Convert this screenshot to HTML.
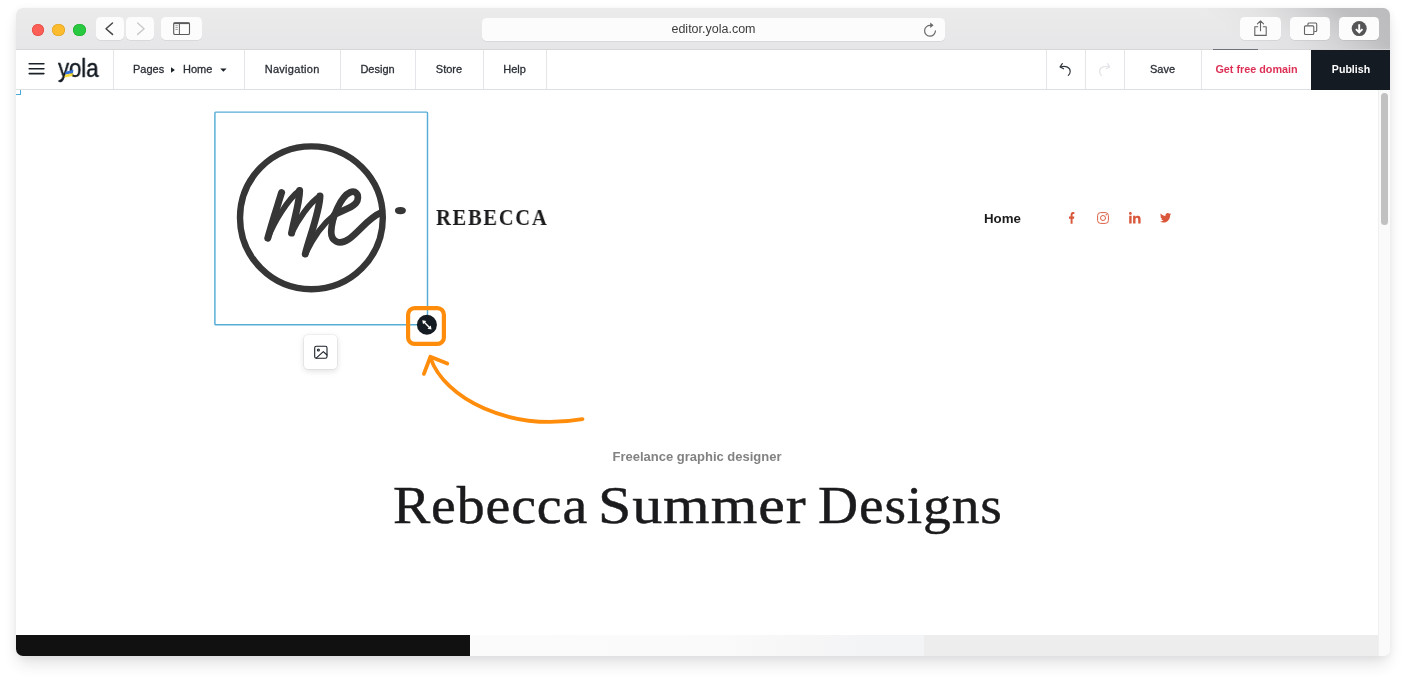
<!DOCTYPE html>
<html lang="en">
<head>
<meta charset="utf-8">
<title>Yola Editor</title>
<style>
*{box-sizing:border-box;margin:0;padding:0}
html,body{width:1406px;height:680px;overflow:hidden;background:#fff;font-family:"Liberation Sans",sans-serif}
#shadow{position:absolute;left:16px;top:8px;width:1374px;height:648px;border-radius:7px;box-shadow:0 10px 16px -3px rgba(40,45,50,.14),0 1px 9px rgba(40,45,50,.055)}
#win{position:absolute;left:16px;top:8px;width:1374px;height:648px;border-radius:7px;background:#fff;overflow:hidden}
#pg{position:absolute;left:-16px;top:-8px;width:1406px;height:680px}
#pg div,#pg svg{position:absolute}
svg{overflow:visible}
.t{will-change:transform;white-space:nowrap}
#titlebar{left:16px;top:8px;width:1374px;height:42px;background:linear-gradient(38deg,rgba(188,187,190,0) 0%,rgba(188,187,190,0) 50%,rgba(188,187,190,.15) 64%,rgba(188,187,190,.4) 73%,rgba(188,187,190,.65) 80%,rgba(188,187,190,.95) 87%,#bcbbbe 100%) no-repeat right top/330px 100%,linear-gradient(180deg,#ecebec,#e6e5e7);border-bottom:1px solid #d6d5d7}
.tl{top:23.5px;width:12.5px;height:12.5px;border-radius:50%}
.tbtn{top:17.2px;height:22.8px;background:#fcfcfc;border-radius:4.5px;box-shadow:0 .5px .6px rgba(0,0,0,.12)}
#toolbar{left:16px;top:50px;width:1374px;height:40px;background:#fff;border-bottom:1px solid #dcdfe4}
.sep{top:50px;width:1px;height:39px;background:#e4e6ea}
.ti{top:50px;height:39px;line-height:39px;font-size:11px;color:#2b2f36;-webkit-text-stroke:.3px currentColor}
.h1{height:60px;line-height:60px;font-family:'Liberation Serif',serif;font-size:53px;color:#1b1b1d;-webkit-text-stroke:.45px #1b1b1d;letter-spacing:.8px;transform-origin:0 50%;transform:scaleX(1.07)}
</style>
</head>
<body>
<div id="shadow"></div>
<div id="win"><div id="pg">

  <!-- ===== Safari title bar ===== -->
  <div id="titlebar"></div>
  <div class="tl" style="left:31.5px;background:#fd5f57;box-shadow:inset 0 0 0 .6px #e0443e"></div>
  <div class="tl" style="left:52.3px;background:#fdbb2e;box-shadow:inset 0 0 0 .6px #dea123"></div>
  <div class="tl" style="left:73px;background:#28c840;box-shadow:inset 0 0 0 .6px #1dad2b"></div>
  <div class="tbtn" style="left:96px;width:28px"></div>
  <div class="tbtn" style="left:126px;width:28px"></div>
  <div class="tbtn" style="left:161px;width:41px"></div>
  <div class="tbtn" style="left:482px;width:462.8px;top:18.1px"></div>
  <div class="t" style="left:482px;top:17.6px;width:463px;height:23px;line-height:22px;text-align:center;font-size:12.5px;color:#3d3d3f">editor.yola.com</div>
  <div class="tbtn" style="left:1240px;width:41px"></div>
  <div class="tbtn" style="left:1290px;width:40px"></div>
  <div class="tbtn" style="left:1339px;width:40px"></div>
  <svg style="left:0;top:0" width="1406" height="60" viewBox="0 0 1406 60" fill="none">
    <path d="M112.5 23 L106 28.7 L112.5 34.4" stroke="#454547" stroke-width="1.5" stroke-linecap="round" stroke-linejoin="round"/>
    <path d="M137.6 23 L144.1 28.7 L137.6 34.4" stroke="#c9c9ca" stroke-width="1.4" stroke-linecap="round" stroke-linejoin="round"/>
    <rect x="173.7" y="22.8" width="15.8" height="11.7" rx="1.3" stroke="#5a5a5c" stroke-width="1.1"/>
    <path d="M173.7 23.3 H189.5" stroke="#5a5a5c" stroke-width="1.6"/>
    <path d="M179.4 22.8 V34.5" stroke="#5a5a5c" stroke-width="1"/>
    <path d="M175.4 25.7 H177.8 M175.4 27.6 H177.8 M175.4 29.5 H177.8" stroke="#8a8a8c" stroke-width=".8"/>
    <!-- reload -->
    <path d="M935.4 30.9 A5.4 5.4 0 1 1 930.6 25.4" stroke="#6a6a6c" stroke-width="1.2" stroke-linecap="round"/>
    <path d="M930.2 22.6 L933.6 25.3 L930.2 27.9 Z" fill="#6a6a6c"/>
    <!-- share -->
    <path d="M1258.2 26.7 H1254.8 V35.4 H1266.2 V26.7 H1262.8" stroke="#636365" stroke-width="1.1" stroke-linejoin="round"/>
    <path d="M1260.5 30.8 V21 M1257.4 23.9 L1260.5 20.8 L1263.6 23.9" stroke="#636365" stroke-width="1.1" stroke-linecap="round" stroke-linejoin="round"/>
    <!-- tabs -->
    <rect x="1304.5" y="25.9" width="9.3" height="8.6" rx="1" stroke="#636365" stroke-width="1.1"/>
    <path d="M1307.9 25.6 V24 Q1307.9 23 1308.9 23 H1315.7 Q1316.7 23 1316.7 24 V30.5 Q1316.7 31.5 1315.7 31.5 H1314.2" stroke="#636365" stroke-width="1.1"/>
    <!-- download -->
    <circle cx="1359.2" cy="28.6" r="7.5" fill="#555557"/>
    <path d="M1359.2 24.2 V32.2 M1355.9 29.2 L1359.2 32.5 L1362.5 29.2" stroke="#fff" stroke-width="1.9" stroke-linecap="butt" stroke-linejoin="miter"/>
  </svg>
  <div style="left:1213px;top:49px;width:45px;height:1px;background:#6e717b"></div>

  <!-- ===== Yola toolbar ===== -->
  <div id="toolbar"></div>
  <div class="sep" style="left:112.7px"></div>
  <div class="sep" style="left:244px"></div>
  <div class="sep" style="left:339.5px"></div>
  <div class="sep" style="left:415px"></div>
  <div class="sep" style="left:483px"></div>
  <div class="sep" style="left:546px"></div>
  <div class="sep" style="left:1045.6px"></div>
  <div class="sep" style="left:1085px"></div>
  <div class="sep" style="left:1124px"></div>
  <div class="sep" style="left:1201px"></div>
  <svg style="left:0;top:50px" width="1406" height="40" viewBox="0 50 1406 40" fill="none">
    <path d="M29.2 63.8 H43.9 M29.2 68.7 H43.9 M29.2 73.6 H43.9" stroke="#1b2128" stroke-width="1.6" stroke-linecap="round"/>
    <path d="M171 67.2 L174.9 70 L171 72.8 Z" fill="#1b2128"/>
    <path d="M220.2 68.4 H226.6 L223.4 71.8 Z" fill="#1b2128"/>
    <!-- undo -->
    <path d="M1062.3 63.6 L1060.1 66.9 L1063.6 68.8" stroke="#30353c" stroke-width="1.15" stroke-linecap="round" stroke-linejoin="round"/>
    <path d="M1060.4 66.9 C1066 65.2 1070.3 67.6 1070.2 71.6 C1070.2 73.2 1069.5 74.5 1068.3 75.4" stroke="#30353c" stroke-width="1.15" stroke-linecap="round"/>
    <!-- redo -->
    <path d="M1107.5 63.6 L1109.7 66.9 L1106.2 68.8" stroke="#e3e5e9" stroke-width="1.3" stroke-linecap="round" stroke-linejoin="round"/>
    <path d="M1109.4 66.9 C1103.8 65.2 1099.5 67.6 1099.6 71.6 C1099.6 73.2 1100.3 74.5 1101.5 75.4" stroke="#e3e5e9" stroke-width="1.3" stroke-linecap="round"/>
  </svg>
  <div class="t" style="left:57.6px;top:51.6px;height:39px;line-height:33px;font-size:26px;letter-spacing:-.2px;color:#141b22;-webkit-text-stroke:.4px #141b22;transform-origin:0 0;transform:scaleX(.86)">yola</div>
  <svg style="left:60px;top:66px" width="20" height="14" viewBox="60 66 20 14"><path d="M65.6 71.7 L73.4 69.8 L73 73 L65 74.8 Z" fill="#2f6fd6"/><path d="M65 74.8 L73 73 L72.4 76 L64.4 77.6 Z" fill="#f9dc3e"/></svg>
  <div class="ti t" style="left:133.4px">Pages</div>
  <div class="ti t" style="left:183px">Home</div>
  <div class="ti t" style="left:244px;width:96px;text-align:center;letter-spacing:.3px;text-indent:.3px">Navigation</div>
  <div class="ti t" style="left:340px;width:75px;text-align:center">Design</div>
  <div class="ti t" style="left:415px;width:68px;text-align:center">Store</div>
  <div class="ti t" style="left:483px;width:63px;text-align:center">Help</div>
  <div class="ti t" style="left:1124px;width:77px;text-align:center">Save</div>
  <div class="ti t" style="left:1201.5px;width:109px;text-align:center;color:#dc3055;font-weight:bold;font-size:10.8px;-webkit-text-stroke:0">Get free domain</div>
  <div style="left:1310.6px;top:50px;width:80px;height:40px;background:#141b22"></div>
  <div class="ti t" style="left:1310.5px;width:80px;text-align:center;color:#fff;font-weight:bold;font-size:10.6px;-webkit-text-stroke:0">Publish</div>
  <div style="left:16px;top:90px;width:5.4px;height:4.6px;border:1.5px solid #4aa8d8;border-top:0;border-left:0"></div>

  <!-- ===== page content ===== -->
  <!-- selection box -->
  <svg style="left:210px;top:108px" width="222" height="222" viewBox="210 108 222 222" fill="none"><rect x="214.9" y="112.1" width="212.6" height="212.7" rx=".8" stroke="#55add6" stroke-width="1.45"/></svg>
  <!-- logo -->
  <svg style="left:214px;top:111px" width="214" height="214" viewBox="214 111 214 214" fill="none" stroke="#363636" stroke-linecap="round" stroke-linejoin="round">
    <circle cx="311.4" cy="217.8" r="71.4" stroke-width="6.4"/>
    <path d="M281.6 192.6 C277.5 206 271.5 224 267.8 238.2 M299.6 190.4 C300 200 294.5 218 291.6 233 M320 196 C319.6 212 309.2 238 305.3 254" stroke-width="7"/>
    <path d="M267.8 238.2 C274 222 288 199 299.6 190.4 M291.6 233 C298 220 309 203 320 196 M305.3 254 C311 242 320 226 334.4 214.7" stroke-width="5.7"/>
    <path d="M334.4 214.7 C343 210 355 207 357.4 200.6 C359.5 193.5 355 190.3 350 192.4 C341 196.5 331.6 217 331.2 231.9 C331.1 241 339 246 349 239 C360 231 368 218 381.5 212.4" stroke-width="6.7"/>
    <ellipse cx="400.4" cy="210.6" rx="3.2" ry="1.4" stroke-width="4.6"/>
  </svg>
  <div class="t" style="left:435.6px;top:205px;font:bold 22px/26px 'Liberation Serif',serif;letter-spacing:1.7px;color:#1b1b1d;transform-origin:0 20px;transform:scale(.94,1.05)">REBECCA</div>
  <div class="t" style="left:984.3px;top:210.2px;font:bold 13.3px/18px 'Liberation Sans',sans-serif;color:#1c1c1e">Home</div>
  <svg style="left:1069px;top:212.3px" width="5.4" height="11.8" viewBox="22 0 276 512" preserveAspectRatio="none"><path fill="#d9573a" d="M279.14 288l14.22-92.66h-88.91v-60.13c0-25.35 12.42-50.06 52.24-50.06h40.42V6.26S260.43 0 225.36 0c-73.22 0-121.08 44.38-121.08 124.72v70.62H22.89V288h81.39v224h100.17V288z"/></svg>
  <svg style="left:1097px;top:212.2px" width="12" height="12" viewBox="0 0 12 12" fill="none" stroke="#d9573a"><rect x=".6" y=".6" width="10.8" height="10.8" rx="3" stroke-width=".95"/><circle cx="6" cy="6" r="2.5" stroke-width=".95"/><circle cx="9.2" cy="2.8" r=".7" fill="#d9573a" stroke="none"/></svg>
  <svg style="left:1128.7px;top:212.4px" width="11.6" height="11.5" viewBox="0 0 448 448" preserveAspectRatio="none"><path fill="#d9573a" d="M100.28 448H7.4V148.9h92.88zM53.79 108.1C24.09 108.1 0 83.5 0 53.8a53.79 53.79 0 0 1 107.58 0c0 29.7-24.1 54.3-53.79 54.3zM447.9 448h-92.68V302.4c0-34.7-.7-79.2-48.29-79.2-48.29 0-55.69 37.7-55.69 76.7V448h-92.78V148.9h89.08v40.8h1.3c12.4-23.5 42.69-48.3 87.88-48.3 94 0 111.28 61.9 111.28 142.3V448z"/></svg>
  <svg style="left:1159.8px;top:213.3px" width="11.2" height="9.5" viewBox="0 48 512 416" preserveAspectRatio="none"><path fill="#d9573a" d="M459.37 151.716c.325 4.548.325 9.097.325 13.645 0 138.72-105.583 298.558-298.558 298.558-59.452 0-114.68-17.219-161.137-47.106 8.447.974 16.568 1.299 25.34 1.299 49.055 0 94.213-16.568 130.274-44.832-46.132-.975-84.792-31.188-98.112-72.772 6.498.974 12.995 1.624 19.818 1.624 9.421 0 18.843-1.3 27.614-3.573-48.081-9.747-84.143-51.98-84.143-102.985v-1.299c13.969 7.797 30.214 12.67 47.431 13.319-28.264-18.843-46.781-51.005-46.781-87.391 0-19.492 5.197-37.36 14.294-52.954 51.655 63.675 129.3 105.258 216.365 109.807-1.624-7.797-2.599-15.918-2.599-24.04 0-57.828 46.782-104.934 104.934-104.934 30.213 0 57.502 12.67 76.67 33.137 23.715-4.548 46.456-13.32 66.599-25.34-7.798 24.366-24.366 44.833-46.132 57.827 21.117-2.273 41.584-8.122 60.426-16.243-14.292 20.791-32.161 39.308-52.628 54.253z"/></svg>
  <!-- image button -->
  <div style="left:304px;top:335.4px;width:33.3px;height:34px;background:#fff;border-radius:4px;box-shadow:0 0 0 .6px rgba(20,27,34,.09),0 2px 6px rgba(20,27,34,.14)"></div>
  <svg style="left:314px;top:345px" width="14" height="14" viewBox="0 0 14 14" fill="none" stroke="#1b2128" stroke-width="1.1" stroke-linejoin="round" stroke-linecap="round">
    <rect x=".7" y="1.3" width="12.3" height="12" rx="1.6"/>
    <circle cx="4.4" cy="5" r="1" />
    <path d="M2.2 13.1 L9.3 6.6 L13 10"/>
  </svg>
  <!-- resize handle + annotation -->
  <svg style="left:400px;top:300px" width="200" height="140" viewBox="400 300 200 140" fill="none">
    <circle cx="426.9" cy="324.8" r="10" fill="#141b22"/>
    <path d="M423.3 321.2 L430.5 328.4" stroke="#fff" stroke-width="1.4"/>
    <path d="M422.3 320.2 L426.3 320.9 L423 324.2 Z M431.5 329.4 L427.5 328.7 L430.8 325.4 Z" fill="#fff"/>
    <rect x="408.1" y="308.1" width="35.8" height="35.8" rx="6.5" stroke="#ff8c0a" stroke-width="4.2"/>
    <path d="M430.5 358 C444.1 397.9 508.5 431.8 582.5 419.1" stroke="#ff8c0a" stroke-width="3.8" stroke-linecap="round"/>
    <path d="M423.9 373.9 L430.4 356.8 L447.3 363.5" stroke="#ff8c0a" stroke-width="3.8" stroke-linecap="round" stroke-linejoin="round"/>
  </svg>
  <!-- hero text -->
  <div class="t" style="left:16px;top:448px;width:1362px;height:18px;line-height:18px;text-align:center;font-weight:bold;font-size:13px;color:#828282">Freelance graphic designer</div>
  <div class="t h1" style="left:393.2px;top:475px;transform:scaleX(1.054)">Rebecca </div>
  <div class="t h1" style="left:597.6px;top:475px;transform:scaleX(1.131)">Summer </div>
  <div class="t h1" style="left:818px;top:475px;transform:scaleX(1.047)">Designs</div>

  <!-- bottom strip -->
  <div style="left:16px;top:635px;width:454px;height:21px;background:#111"></div>
  <div style="left:470px;top:635px;width:454px;height:21px;background:linear-gradient(90deg,#fbfbfb 0%,#fafafa 55%,#f6f6f7 75%,#f3f4f6 88%,#f3f4f6 100%)"></div>
  <div style="left:924px;top:635px;width:454.4px;height:21px;background:#ededed"></div>
  <!-- scrollbar -->
  <div style="left:1377.6px;top:90px;width:12.4px;height:566px;background:#fafafa;border-left:1px solid #f0f0f0"></div>
  <div style="left:1380.5px;top:92.5px;width:7px;height:132px;background:#c1c1c1;border-radius:3.5px"></div>
</div></div>
</body>
</html>
